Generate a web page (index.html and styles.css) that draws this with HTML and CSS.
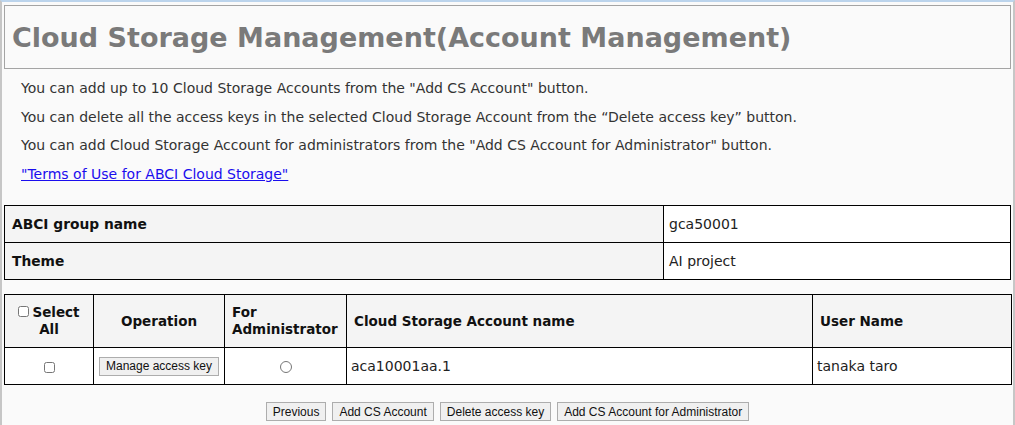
FILE: index.html
```html
<!DOCTYPE html>
<html>
<head>
<meta charset="utf-8">
<link rel="stylesheet" href="styles.css">
</head>
<body>
<div class="frame">
  <div class="title-box"><h1 class="title">Cloud Storage Management(Account Management)</h1></div>
  <div class="intro">
    <div class="line">You can add up to 10 Cloud Storage Accounts from the "Add CS Account" button.</div>
    <div class="line">You can delete all the access keys in the selected Cloud Storage Account from the “Delete access key” button.</div>
    <div class="line">You can add Cloud Storage Account for administrators from the "Add CS Account for Administrator" button.</div>
    <div class="line"><a class="link" href="#">"Terms of Use for ABCI Cloud Storage"</a></div>
  </div>
  <table class="info">
    <tr><th class="info-label">ABCI group name</th><td class="info-val">gca50001</td></tr>
    <tr><th class="info-label">Theme</th><td class="info-val">AI project</td></tr>
  </table>
  <table class="accounts">
    <colgroup><col class="c1"><col class="c2"><col class="c3"><col class="c4"><col class="c5"></colgroup>
    <tr class="head">
      <th class="center"><label class="selall"><input type="checkbox" class="cb">Select<br>All</label></th>
      <th class="center">Operation</th>
      <th class="left">For<br>Administrator</th>
      <th class="left">Cloud Storage Account name</th>
      <th class="left">User Name</th>
    </tr>
    <tr class="data">
      <td class="center"><input type="checkbox" class="cb"></td>
      <td class="center"><button class="btn">Manage access key</button></td>
      <td class="center"><input type="radio" class="rb"></td>
      <td class="txt">aca10001aa.1</td>
      <td class="txt">tanaka taro</td>
    </tr>
  </table>
  <div class="actions">
    <button class="btn">Previous</button>
    <button class="btn">Add CS Account</button>
    <button class="btn">Delete access key</button>
    <button class="btn">Add CS Account for Administrator</button>
  </div>
</div>
</body>
</html>
```
FILE: styles.css
```css
html, body { margin: 0; padding: 0; }
body {
  background: #fafafa;
  font-family: "DejaVu Sans", Verdana, sans-serif;
  font-size: 14px;
  color: #222;
}
.frame {
  border-top: 2px solid #bcd4ec;
  border-left: 2px solid #c6c6c6;
  border-right: 2px solid #c6c6c6;
  padding: 3px 2px 0 2px;
  height: 425px;
  box-sizing: border-box;
  overflow: hidden;
}
.title-box {
  border: 1px solid #a4a4a4;
  height: 62px;
  display: flex;
  align-items: center;
  padding-left: 7px;
}
.title {
  margin: 0;
  font-size: 27px;
  font-weight: bold;
  color: #7a7a7a;
}
.intro {
  padding: 5px 0 0 17px;
}
.line {
  line-height: 28.5px;
  color: #333;
}
.link { color: #1a0dee; text-decoration: underline; }
table {
  border-collapse: collapse;
  width: 100%;
}
th, td { border: 1px solid #000; }
.info { margin-top: 17px; }
.info tr { height: 37px; }
.info-label {
  background: #f4f4f4;
  text-align: left;
  font-weight: bold;
  font-size: 13.8px;
  padding: 0 7px;
  width: 644px;
  color: #111;
}
.info-val { background: #fff; padding: 0 5px; color: #222; }
.accounts { margin-top: 14px; table-layout: fixed; }
.c1 { width: 89px; }
.c2 { width: 131px; }
.c3 { width: 122px; }
.c4 { width: 466px; }
.c5 { width: 199px; }
.head { height: 53px; }
.head th { background: #f4f4f4; font-weight: bold; font-size: 13.5px; color: #111; padding: 0 7px; line-height: 17px; }
.center { text-align: center; }
.left { text-align: left; }
.data { height: 37px; }
.data td { background: #fff; }
.txt { padding: 0 4px; color: #222; }
.selall { display: inline-block; }
.cb { width: 11px; height: 11px; margin: 0 3px 0 0; vertical-align: 0; }
.data .cb { margin: 0; vertical-align: middle; }
.rb { width: 12px; height: 12px; margin: 0; vertical-align: middle; }
.btn {
  font-family: "Liberation Sans", Arial, sans-serif;
  font-size: 12px;
  color: #111;
  background: #f0f0f0;
  border: 1px solid #adadad;
  padding: 1px 6px;
  height: 19px;
  margin: 0;
}
.actions {
  display: flex;
  justify-content: center;
  gap: 6px;
  margin-top: 17px;
}
```
